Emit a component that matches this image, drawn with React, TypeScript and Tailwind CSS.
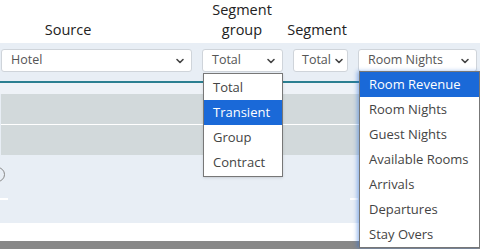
import { ChevronDown } from 'lucide-react';

const GROUP_OPTIONS = ['Total', 'Transient', 'Group', 'Contract'];
const METRIC_OPTIONS = [
  'Room Revenue',
  'Room Nights',
  'Guest Nights',
  'Available Rooms',
  'Arrivals',
  'Departures',
  'Stay Overs',
];

function Select({ value, className }: { value: string; className: string }) {
  return (
    <div
      className={`h-[23px] flex items-center justify-between bg-white border border-[#cfd4da] rounded-[3px] text-[12.5px] text-[#555] ${className}`}
    >
      <span className="whitespace-nowrap">{value}</span>
      <ChevronDown size={12} strokeWidth={3.2} className="text-[#444] flex-shrink-0" />
    </div>
  );
}

export default function App() {
  return (
    <div
      className="relative w-[480px] h-[249px] overflow-hidden bg-white"
      style={{ fontFamily: '"Open Sans", "Noto Sans", sans-serif' }}
    >
      {/* Column labels */}
      <div className="h-[43px] flex items-end text-[14.5px] text-[#222] leading-[20px] pb-[3px]">
        <div className="w-[136px] text-center">Source</div>
        <div className="w-[80px] ml-[66px] text-center">
          Segment
          <br />
          group
        </div>
        <div className="ml-[5px] w-[60px] text-center">Segment</div>
      </div>

      {/* Filter band */}
      <div className="h-[180px] bg-[#e8eef5]">
        <div className="flex items-center pt-[6px] h-[29px]">
          <Select value="Hotel" className="ml-[1px] w-[191px] pl-[9px] pr-[5px]" />
          <Select value="Total" className="ml-[10px] w-[81px] pl-[9px] pr-[5px]" />
          <Select value="Total" className="ml-[10px] w-[55px] pl-[8px] pr-[2px] gap-[1px]" />
          <Select value="Room Nights" className="ml-[10px] w-[119px] pl-[9px] pr-[5px]" />
        </div>
        <div className="mt-[9px] w-[360px] h-[2px] bg-[#2b7f91]" />
        <div className="w-[360px] h-[11px] bg-[#eef2f7]" />
        <div className="w-[358px] ml-[1px] flex flex-col gap-[1px] bg-white">
          <div className="h-[30px] bg-[#d2d9db]" />
          <div className="h-[30px] bg-[#d2d9db]" />
        </div>
        <div className="h-[43px] relative">
          <div className="absolute left-[-10px] top-[12px] w-[15px] h-[15px] rounded-full border border-[#888]" />
        </div>
        <div className="flex justify-between w-[358px]">
          <div className="w-[8px] h-[2px] bg-white" />
          <div className="w-[8px] h-[2px] bg-white" />
        </div>
      </div>

      <div className="h-[18px] bg-white" />
      <div className="h-[8px] bg-[#888]" />

      {/* Segment group dropdown */}
      <div className="absolute left-[203px] top-[73px] w-[80px] bg-white border border-[#777] py-[1px] text-[13px] text-[#444] shadow-sm">
        {GROUP_OPTIONS.map((o) => (
          <div
            key={o}
            className={`h-[25px] flex items-center px-[9px] ${o === 'Transient' ? 'bg-[#1a69d8] text-white' : ''}`}
          >
            {o}
          </div>
        ))}
      </div>

      {/* Metric dropdown */}
      <div className="absolute left-[359px] top-[71px] w-[121px] bg-white border border-[#777] text-[13px] text-[#444] shadow-[-2px_0_4px_rgba(40,110,220,0.45)]">
        {METRIC_OPTIONS.map((o) => (
          <div
            key={o}
            className={`h-[25px] flex items-center px-[9px] ${o === 'Room Revenue' ? 'bg-[#1a69d8] text-white' : ''}`}
          >
            {o}
          </div>
        ))}
      </div>
    </div>
  );
}
